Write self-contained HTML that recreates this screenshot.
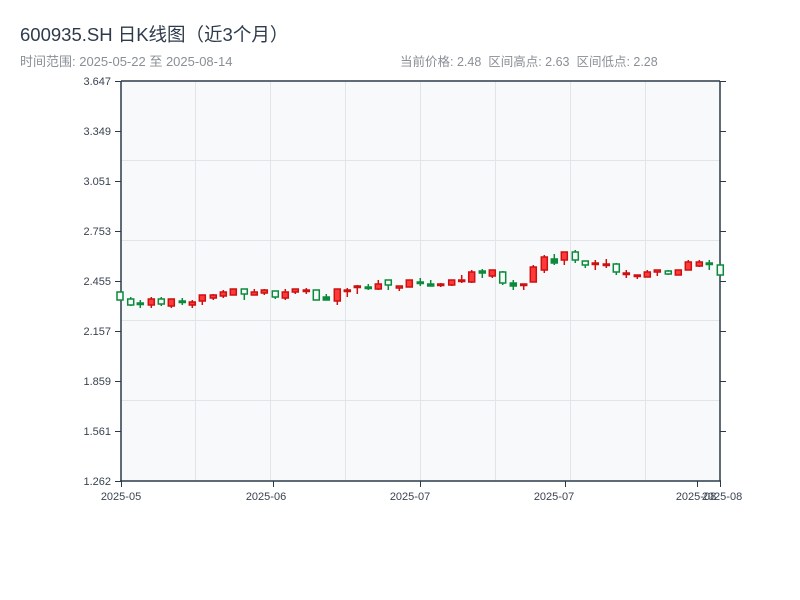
<!DOCTYPE html>
<html><head><meta charset="utf-8"><style>
body{margin:0;background:#fff;width:800px;height:600px;overflow:hidden;font-family:"Liberation Sans","Noto Sans CJK SC",sans-serif}
.t{position:absolute;left:20px;top:21px;font-size:18.5px;color:#2e3b4c}
.s{position:absolute;top:51px;font-size:13px;color:#8a8f96}
</style></head><body>
<div class="t">600935.SH 日K线图（近3个月）</div>
<div class="s" style="left:20px">时间范围: 2025-05-22 至 2025-08-14</div>
<div class="s" style="left:400px;font-size:12.5px">当前价格: 2.48&nbsp;&nbsp;区间高点: 2.63&nbsp;&nbsp;区间低点: 2.28</div>
<svg width="800" height="600" style="position:absolute;left:0;top:0" font-family="Liberation Sans,sans-serif" font-size="11" fill="#333">
<rect x="121" y="81" width="599" height="400" fill="#f7f9fb"/>
<g stroke="#e1e5ea" stroke-width="1">
<line x1="195.5" y1="81" x2="195.5" y2="481"/><line x1="270.5" y1="81" x2="270.5" y2="481"/><line x1="345.5" y1="81" x2="345.5" y2="481"/><line x1="420.5" y1="81" x2="420.5" y2="481"/><line x1="495.5" y1="81" x2="495.5" y2="481"/><line x1="570.5" y1="81" x2="570.5" y2="481"/><line x1="645.5" y1="81" x2="645.5" y2="481"/>
<line x1="121" y1="160.5" x2="720" y2="160.5"/><line x1="121" y1="240.5" x2="720" y2="240.5"/><line x1="121" y1="320.5" x2="720" y2="320.5"/><line x1="121" y1="400.5" x2="720" y2="400.5"/>
</g>
<g stroke="#2b3a4a" stroke-width="1.5" fill="none">
<line x1="121" y1="81" x2="121" y2="481"/><line x1="120" y1="481" x2="721" y2="481"/><line x1="720" y1="81" x2="720" y2="481"/><line x1="121" y1="81" x2="720" y2="81"/>
</g>
<g stroke="#2b3a4a" stroke-width="1">
<line x1="115" y1="81.5" x2="121" y2="81.5"/><line x1="115" y1="131.5" x2="121" y2="131.5"/><line x1="115" y1="181.5" x2="121" y2="181.5"/><line x1="115" y1="231.5" x2="121" y2="231.5"/><line x1="115" y1="281.5" x2="121" y2="281.5"/><line x1="115" y1="331.5" x2="121" y2="331.5"/><line x1="115" y1="381.5" x2="121" y2="381.5"/><line x1="115" y1="431.5" x2="121" y2="431.5"/><line x1="115" y1="481.5" x2="121" y2="481.5"/>
<line x1="720" y1="81.5" x2="726" y2="81.5"/><line x1="720" y1="131.5" x2="726" y2="131.5"/><line x1="720" y1="181.5" x2="726" y2="181.5"/><line x1="720" y1="231.5" x2="726" y2="231.5"/><line x1="720" y1="281.5" x2="726" y2="281.5"/><line x1="720" y1="331.5" x2="726" y2="331.5"/><line x1="720" y1="381.5" x2="726" y2="381.5"/><line x1="720" y1="431.5" x2="726" y2="431.5"/>
<line x1="121.5" y1="481" x2="121.5" y2="487"/><line x1="273.5" y1="481" x2="273.5" y2="487"/><line x1="420.5" y1="481" x2="420.5" y2="487"/><line x1="565.5" y1="481" x2="565.5" y2="487"/><line x1="697.5" y1="481" x2="697.5" y2="487"/><line x1="720.5" y1="481" x2="720.5" y2="487"/>
</g>
<g text-anchor="end" fill="#3a4350">
<text x="111" y="85">3.647</text><text x="111" y="135">3.349</text><text x="111" y="185">3.051</text><text x="111" y="235">2.753</text><text x="111" y="285">2.455</text><text x="111" y="335">2.157</text><text x="111" y="385">1.859</text><text x="111" y="435">1.561</text><text x="111" y="485">1.262</text>
</g>
<g text-anchor="middle" fill="#3a4350">
<text x="121" y="500">2025-05</text><text x="266" y="500">2025-06</text><text x="410" y="500">2025-07</text><text x="554" y="500">2025-07</text><text x="696" y="500">2025-08</text><text x="722" y="500">2025-08</text>
</g>
<g id="c" stroke-width="1.5"></g>
</svg>
<script>
var d=[
[120,'gh',292,300,292,300],[130.7,'gh',299,305,297,306],[140.3,'g',303,304,300,308],[151.3,'r',299,305,297,308],[161.3,'gh',299,304,297,306],[171.3,'r',299,306,299,308],[182.3,'g',301,302,298,305],[192.3,'r',302,305,300,308],[202.3,'r',295,301,295,305],[213.3,'r',295,298,294,300],[223.3,'r',292,296,290,298],[233.3,'r',289,295,289,295],[244.3,'gh',289,294,289,300],[254.3,'r',292,295,289,295],[264.3,'r',290,293,289,295],[275.3,'gh',291,297,291,299],[285.3,'r',292,298,289,300],[295.3,'r',289,292,289,294],[306.3,'r',290,291,288,294],[316.3,'gh',290,300,290,300],[326.3,'g',297,300,294,300],[337.3,'r',289,301,289,305],[347.3,'r',290,291,288,297],[357.3,'r',286,287,285,294],[368.3,'g',287,288,284,290],[378.3,'r',284,289,280,290],[388.3,'gh',280,285,280,290],[399.3,'r',286,288,286,291],[409.3,'r',280,287,280,287],[420.3,'g',282,283,278,286],
[430.7,'g',284,286,280,286],[440.7,'r',284,285,283,287],[451.7,'r',280,285,280,286],[461.7,'r',280,281,275,283],[471.7,'r',272,282,270,283],[482.3,'g',271,273,269,278],[492.3,'r',270,276,270,278],[502.7,'gh',272,283,271,285],[513.3,'g',283,286,280,290],[523.7,'r',284,285,284,290],[533.3,'r',267,282,265,282],[544.3,'r',257,270,255,273],[554.3,'g',259,263,254,265],[564.3,'r',252,260,252,265],[575.3,'gh',252,260,250,263],[585.3,'gh',261,265,261,268],[595.3,'r',263,264,260,270],[606.3,'r',264,265,259,268],[616.3,'gh',264,272,263,275],[626.3,'r',273,274,270,278],[637.3,'r',275,276,275,279],[647.3,'r',272,277,270,277],[657.3,'r',270,272,270,276],[668.3,'gh',271,274,270,275],[678.3,'r',270,275,270,275],[688.3,'r',262,270,260,270],[699.3,'r',262,266,260,267],[709.3,'g',263,264,260,270],[720.3,'gh',265,275,263,277]];
var s='';d.forEach(function(c){var x=c[0],col=c[1][0]=='r'?'#cc1111':'#0a8a3a',f=c[1]=='r'?'#ff3a3a':(c[1]=='gh'?'#f7f9fb':'#0a8a3a');
s+='<line x1="'+x+'" x2="'+x+'" y1="'+c[4]+'" y2="'+c[5]+'" stroke="'+col+'"/>';
var h=Math.max(c[3]-c[2],1.5);s+='<rect x="'+(x-3)+'" y="'+c[2]+'" width="6" height="'+h+'" fill="'+f+'" stroke="'+col+'"/>';});
document.getElementById('c').innerHTML=s;
</script>
</body></html>
